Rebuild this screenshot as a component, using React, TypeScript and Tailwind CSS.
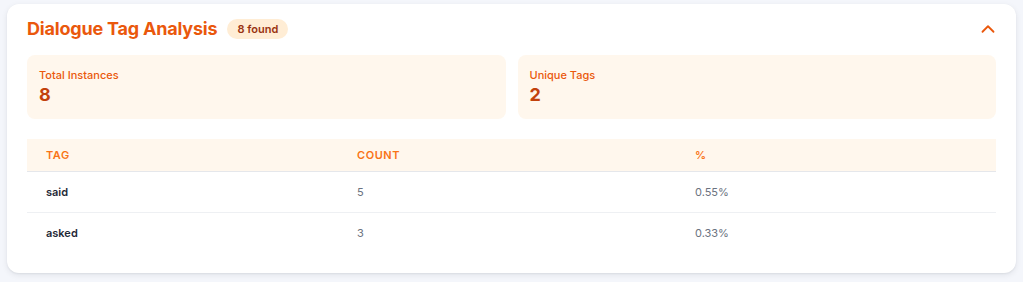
import React from "react";
import { ChevronUp } from "lucide-react";

const rows = [
  { tag: "said", count: 5, pct: "0.55%" },
  { tag: "asked", count: 3, pct: "0.33%" },
];

export default function App() {
  return (
    <div
      className="min-h-[282px] bg-[#f4f6fb] px-[7px] pt-[4px]"
      style={{ fontFamily: "Inter, 'Noto Sans', sans-serif" }}
    >
      <div className="rounded-xl bg-white px-5 pt-[11px] pb-5 shadow-[0_2px_6px_rgba(15,23,42,0.08),0_1px_2px_rgba(15,23,42,0.06)]">
        <div className="flex h-7 items-center justify-between">
          <div className="flex items-center gap-[10px]">
            <h2 className="text-[18px] font-bold leading-7 tracking-[-0.2px] text-[#ea580c]">Dialogue Tag Analysis</h2>
            <span className="rounded-full bg-[#ffedd5] px-2.5 py-[3px] text-[11px] font-semibold leading-[14px] text-[#9a3412]">
              8 found
            </span>
          </div>
          <button className="-mr-[3px] text-[#ea580c]">
            <ChevronUp size={22} strokeWidth={2} />
          </button>
        </div>

        <div className="mt-3 grid grid-cols-2 gap-3">
          <div className="rounded-lg bg-[#fff7ed] p-3">
            <div className="text-[11px] leading-4 font-medium text-[#ea580c]">Total Instances</div>
            <div className="text-[18px] leading-6 font-bold text-[#c2410c]">8</div>
          </div>
          <div className="rounded-lg bg-[#fff7ed] p-3">
            <div className="text-[11px] leading-4 font-medium text-[#ea580c]">Unique Tags</div>
            <div className="text-[18px] leading-6 font-bold text-[#c2410c]">2</div>
          </div>
        </div>

        <div className="mt-5">
          <div className="grid grid-cols-[311px_338px_1fr] border-b border-[#e5e7eb] bg-[#fff7ed] px-[19px] py-2 text-[11px] leading-4 font-semibold uppercase tracking-wider text-[#f97316]">
            <div>Tag</div>
            <div>Count</div>
            <div>%</div>
          </div>
          {rows.map((r, i) => (
            <div
              key={r.tag}
              className={`grid grid-cols-[311px_338px_1fr] px-[19px] py-2.5 text-[11px] leading-5 ${
                i < rows.length - 1 ? "border-b border-[#eef0f3]" : ""
              }`}
            >
              <div className="font-semibold text-[#1f2937]">{r.tag}</div>
              <div className="text-[#6b7280]">{r.count}</div>
              <div className="text-[#6b7280]">{r.pct}</div>
            </div>
          ))}
        </div>
      </div>
    </div>
  );
}
